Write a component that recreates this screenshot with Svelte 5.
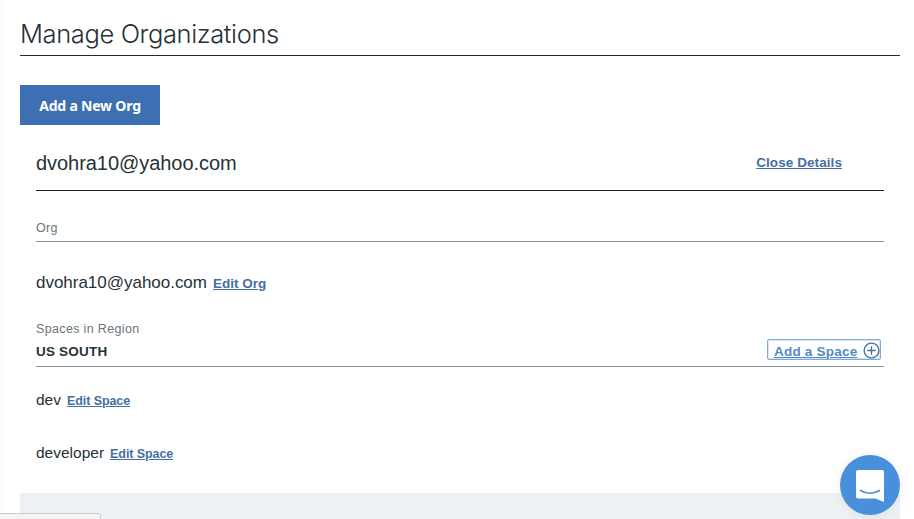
<script>
  const spaces = [{ name: 'dev' }, { name: 'developer' }];
</script>

<div class="page">
  <main>
    <h1>Manage Organizations</h1>
    <button class="new-org">Add a New Org</button>

    <section class="org">
      <header>
        <h2>dvohra10@yahoo.com</h2>
        <a class="close" href="#close">Close Details</a>
      </header>
      <div class="label org-label">Org</div>
      <div class="org-row">
        <span class="org-name">dvohra10@yahoo.com</span>
        <a class="edit-org" href="#org">Edit Org</a>
      </div>
      <div class="region">
        <div>
          <div class="label">Spaces in Region</div>
          <div class="region-name">US SOUTH</div>
        </div>
        <a class="add-space" href="#add">
          <span>Add a Space</span>
          <svg width="18" height="18" viewBox="0 0 18 18" fill="none" stroke="#456fa3" stroke-width="1.3">
            <circle cx="9.500" cy="9.500" r="7.400" />
            <path d="M9.500 5.300v8.400M5.300 9.500h8.400" />
          </svg>
        </a>
      </div>
      {#each spaces as space}
        <div class="space-row">
          <span class="space-name">{space.name}</span>
          <a class="edit-space" href="#space">Edit Space</a>
        </div>
      {/each}
    </section>
    <div class="next-panel"></div>
  </main>
  <div class="status"></div>
  <div class="chat">
    <svg width="60" height="60" viewBox="0 0 60 60">
      <path d="M18 15h24a2 2 0 0 1 2 2v30L35.500 43.500H18a2 2 0 0 1-2-2V17a2 2 0 0 1 2-2z" fill="#fff" />
      <path d="M20.500 35.500q9.500 5.500 19 0" fill="none" stroke="#4a8bd6" stroke-width="1.6" stroke-linecap="round" />
    </svg>
  </div>
</div>

<style>
  :global(body) { background: #fff; }
  .page {
    position: relative;
    width: 914px;
    height: 519px;
    overflow: hidden;
    box-sizing: border-box;
    padding: 0 14px 0 20px;
    background: linear-gradient(90deg, #f6fefe 0, #fff 5px);
    font-family: "Liberation Sans", Arial, sans-serif;
    color: #253238;
  }
  main { display: flex; flex-direction: column; height: 519px; }
  h1 {
    margin: 0;
    flex: none;
    box-sizing: border-box;
    height: 56px;
    padding-top: 18px;
    border-bottom: 1px solid #1c2c35;
    font: 300 25.5px/32px Inter, sans-serif;
    letter-spacing: -.38px;
    white-space: nowrap;
  }
  .new-org {
    flex: none;
    align-self: flex-start;
    width: 140px;
    height: 40px;
    margin-top: 29px;
    padding: 2px 0 0;
    border: 0;
    background: #3d70b2;
    color: #fff;
    font: 700 14px/20px "Noto Sans", "Open Sans", sans-serif;
    letter-spacing: -.2px;
    white-space: nowrap;
  }
  .org { flex: none; height: 368px; padding: 0 16px; }
  header {
    display: flex;
    justify-content: space-between;
    box-sizing: border-box;
    height: 66px;
    padding: 25px 42px 0 0;
    border-bottom: 1px solid #152129;
  }
  h2 { margin: 0; font: 400 20px/26px "Liberation Sans", sans-serif; letter-spacing: -.05px; }
  a { color: #456fa3; font-weight: 700; text-underline-offset: 1px; text-decoration-thickness: 1px; white-space: nowrap; }
  .close { font-size: 13.5px; line-height: 25px; letter-spacing: .08px; }
  .label { font: 400 12.5px/16px "Liberation Sans", sans-serif; color: #69757a; letter-spacing: .35px; }
  .org-label { box-sizing: border-box; height: 51px; padding-top: 29px; border-bottom: 1px solid #899298; }
  .org-row { display: flex; align-items: baseline; height: 79px; line-height: 81px; }
  .org-name { font-size: 17px; letter-spacing: -.02px; }
  .edit-org { margin-left: 6px; font-size: 13.5px; }
  .region {
    display: flex;
    justify-content: space-between;
    box-sizing: border-box;
    height: 46px;
    padding-right: 3px;
    border-bottom: 1px solid #899298;
  }
  .region-name { margin-top: 7px; font: 700 13.5px/16px "Liberation Sans", sans-serif; letter-spacing: .2px; }
  .add-space {
    display: flex;
    align-items: center;
    justify-content: space-between;
    box-sizing: border-box;
    width: 114px;
    height: 21px;
    margin-top: 18px;
    border: 1px solid #7eabdc;
    box-shadow: inset 0 0 0 1px #d3e4f5;
    border-radius: 2px;
    padding: 0 0 0 6px;
    color: #5589c5;
    font-size: 13.5px;
    letter-spacing: .22px;
    text-decoration: none;
  }
  .add-space span { position: relative; top: 2px; text-decoration: underline; text-decoration-thickness: 1px; text-underline-offset: 1px; }
  .space-row { display: flex; align-items: baseline; height: 53px; line-height: 66px; }
  .space-name { font-size: 15.5px; }
  .edit-space { margin-left: 6px; font-size: 12.5px; letter-spacing: -.08px; }
  .next-panel { flex: 1; width: 880px; background: #edf1f4; }
  .status {
    position: absolute;
    left: -1px;
    top: 513px;
    width: 100px;
    height: 10px;
    border: 1px solid #c9caca;
    border-radius: 0 3px 0 0;
    background: #f3f4f3;
  }
  .chat {
    position: absolute;
    left: 840px;
    top: 455px;
    width: 60px;
    height: 60px;
    border-radius: 50%;
    background: #4a8fdb;
    box-shadow: 0 1px 12px rgba(0, 0, 0, .07);
  }
  .chat svg { display: block; }
</style>
